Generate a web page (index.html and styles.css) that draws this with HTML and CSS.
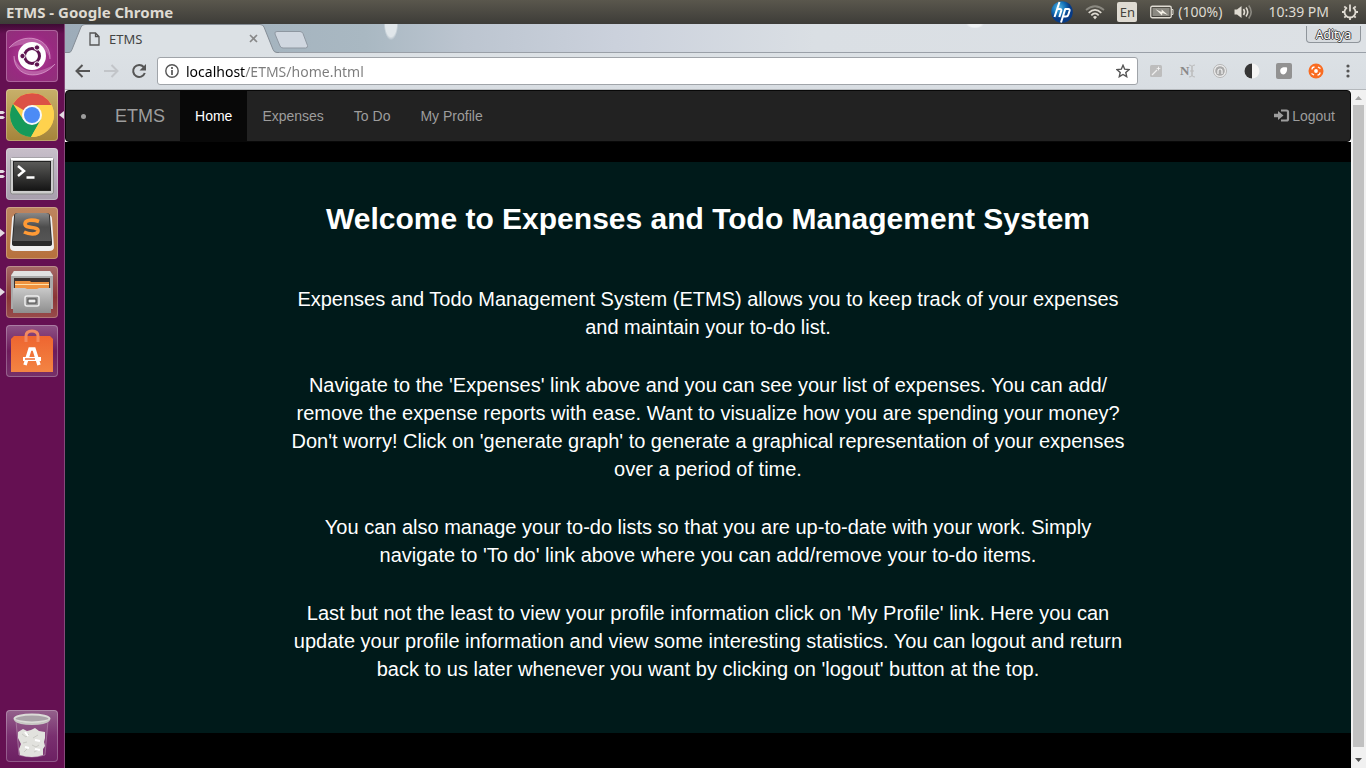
FILE: index.html
```html
<!DOCTYPE html>
<html lang="en">
<head>
<meta charset="utf-8">
<title>ETMS</title>
<link rel="stylesheet" href="styles.css">
</head>
<body>
<header class="panel">
  <span class="panel-title">ETMS - Google Chrome</span>
  <div class="indicators">
    <svg class="ind-hp" width="22" height="22" viewBox="0 0 22 22"><defs><radialGradient id="hp" cx=".35" cy=".3"><stop offset="0" stop-color="#59b8e4"/><stop offset=".6" stop-color="#1673b8"/><stop offset="1" stop-color="#073b86"/></radialGradient></defs><circle cx="11" cy="11" r="10.8" fill="url(#hp)"/><g fill="none" stroke="#fff" stroke-width="2"><path d="M8.500 1 3.500 16M6.400 8h2.500q1.900 0 1.300 2L8.300 16M14.400 7.500 10 21.500M14 8h3.200q1.900 0 1.300 2l-1.200 3.700q-.5 1.800-2.400 1.800h-2.700"/></g></svg>
    <svg class="ind-wifi" width="20" height="16" viewBox="0 0 20 16" fill="none" stroke-width="1.7"><path d="M1 6Q10-1.500 19 6" stroke="#8b8981"/><path d="M3.700 8.800Q10 3 16.300 8.800M6.300 11.400Q10 7.500 13.700 11.400" stroke="#dfdbd2"/><path d="M8 13q2-2 4 0l-2 2.400z" fill="#dfdbd2"/></svg>
    <span class="lang">En</span>
    <svg class="ind-battery" width="24" height="14" viewBox="0 0 24 14"><rect x=".75" y="1.250" width="20.500" height="11.500" rx="1.500" fill="none" stroke="#dfdbd2" stroke-width="1.300"/><path d="M2.500 3h17v8h-17z" fill="#8b8981"/><path d="M21.500 4.500h1.500v5h-1.500" fill="none" stroke="#dfdbd2"/><path d="m5.500 4.300 6 2.700.2-2.500 6.300 5.500-5.500-2-.5 2.600z" fill="#f4f0e6"/></svg>
    <span class="charge">(100%)</span>
    <svg class="ind-sound" width="20" height="16" viewBox="0 0 20 16"><path d="M.5 5.500H3L7.500 2v12L3 10.500H.5z" fill="#dfdbd2"/><path d="M9.500 5q2 3 0 6M12 3.500q3.500 4.500 0 9" fill="none" stroke="#dfdbd2" stroke-width="1.600"/><path d="M14.700 1.500q5 6.500 0 13" fill="none" stroke="#8b8981" stroke-width="1.600"/></svg>
    <span class="clock">10:39 PM</span>
    <svg width="18" height="18" viewBox="0 0 18 18" fill="none" stroke="#dfdbd2"><path d="M6 4.400a5.500 5.500 0 1 0 6 0" stroke-width="1.800"/><path d="M9 1.500v7" stroke-width="1.800"/><path d="M1 9h2.500M14.500 9H17M9 14.500V17M3.300 3.300l1.500 1.500M14.700 3.300l-1.500 1.500M3.300 14.700l1.500-1.500M14.700 14.700l-1.500-1.500" stroke-width="1.800"/></svg>
  </div>
</header>
<div class="desktop">
  <nav class="launcher" aria-label="Launcher">
    <button class="app app-dash" aria-label="Dash">
      <svg width="52" height="52" viewBox="0 0 52 52"><path d="M3 18C17 1 45 7 44 29 40 16 28 9 3 18zM49 34C35 51 8 48 8 26c4 14 18 22 41 8z" fill="#e9b6de" opacity=".35"/><path d="M3 18C17 1 45 7 44 29M49 34C35 51 8 48 8 26" fill="none" stroke="#e9b6de" opacity=".6"/><circle cx="26" cy="26" r="14" fill="#fff"/><circle cx="26" cy="26" r="7.500" fill="none" stroke="#5e1450" stroke-width="3"/><g fill="#5e1450" stroke="#fff"><circle cx="16.500" cy="26" r="2.700"/><circle cx="31" cy="17.500" r="2.700"/><circle cx="31" cy="34.500" r="2.700"/></g></svg>
    </button>
    <button class="app app-chrome" aria-label="Google Chrome">
      <svg width="52" height="52" viewBox="0 0 52 52"><circle cx="26" cy="26" r="22" fill="#ffd24d"/><path d="M26 26 7 15A22 22 0 0 1 45.500 16H26z" fill="#dc5145"/><path d="M7 15a22 22 0 0 0 18 33l10-18-9-4-8.500 5z" fill="#159a5a"/><path d="M26 16h19.500A22 22 0 0 1 25 48l10-17z" fill="#ffd24d"/><circle cx="26" cy="26" r="10" fill="#f8f8f8"/><circle cx="26" cy="26" r="8" fill="#4c8bf5"/></svg>
      <svg class="pips" width="5" height="8" viewBox="0 0 5 8"><path d="M0 0h3l2 1.500L3 3H0zM0 5h3l2 1.500L3 8H0z" fill="#e4dbe2"/></svg>
      <svg class="focus-arrow" width="5" height="8" viewBox="0 0 5 8"><path d="M5 0v8L0 4z" fill="#e4dbe2"/></svg>
    </button>
    <button class="app app-terminal" aria-label="Terminal">
      <svg width="52" height="52" viewBox="0 0 52 52"><defs><linearGradient id="term" x2="0" y2="1"><stop stop-color="#5b5b59"/><stop offset="1" stop-color="#151515"/></linearGradient></defs><rect x="4.500" y="10" width="43" height="36" rx="2" fill="#ccc" stroke="#8a8a8a"/><path d="M5 11h42" stroke="#fff" stroke-width="2"/><rect x="7.500" y="13.500" width="37" height="29" fill="url(#term)" stroke="#222"/><path d="m12 18 6 5-6 5M20.500 29.500h8" fill="none" stroke="#fff" stroke-width="2.500"/></svg>
      <svg class="pips" width="5" height="8" viewBox="0 0 5 8"><path d="M0 0h3l2 1.500L3 3H0zM0 5h3l2 1.500L3 8H0z" fill="#e4dbe2"/></svg>
    </button>
    <button class="app app-sublime" aria-label="Sublime Text">
      <svg width="52" height="52" viewBox="0 0 52 52"><defs><linearGradient id="sub" x2="0" y2="1"><stop stop-color="#888"/><stop offset=".5" stop-color="#4d4d4d"/><stop offset="1" stop-color="#555"/></linearGradient></defs><path d="M6 12q0-4 4-4h32q4 0 4 4l2 28q0 4-5 4H9q-5 0-5-4z" fill="#eee"/><path d="M8 9q0-3 4-3h28q4 0 4 3l2 26v2q0 2-3 2H9q-3 0-3-2v-2z" fill="#292929"/><path d="M9 8q0-2 3-2h28q3 0 3 2l2 26H7z" fill="url(#sub)"/><path d="M33 14.500C26 12 19 13 19 17c0 5 13.500 2 13 7-.5 4-9 3.500-14 1" fill="none" stroke="#ff9a35" stroke-width="3.600"/></svg>
      <svg class="pips" width="5" height="8" viewBox="0 0 5 8"><path d="M0 0 5 4 0 8z" fill="#e4dbe2"/></svg>
    </button>
    <button class="app app-files" aria-label="Files">
      <svg width="52" height="52" viewBox="0 0 52 52"><defs><linearGradient id="cab" x2="0" y2="1"><stop stop-color="#c9c9c9"/><stop offset="1" stop-color="#8e8e8e"/></linearGradient></defs><path d="M8 5h36l3 4v34H5V9z" fill="#aaa"/><path d="M8 5h36l3 5H5z" fill="#e2e2e2"/><path d="M8 12h36v12H8z" fill="#3d3330"/><path d="M9 15h15l1 1h18v8H9z" fill="#ef9340"/><path d="M9 18.500h34" stroke="#ffe1aa"/><path d="M7 22h12l2 1h10l2-1h12v25H7z" fill="url(#cab)"/><rect x="19" y="30" width="14" height="10" rx="2" fill="#999" stroke="#eee" stroke-width="1.500"/><rect x="22" y="33" width="8" height="4" fill="#eee" stroke="#444"/></svg>
      <svg class="pips" width="5" height="8" viewBox="0 0 5 8"><path d="M0 0 5 4 0 8z" fill="#e4dbe2"/></svg>
    </button>
    <button class="app app-software" aria-label="Ubuntu Software">
      <svg width="52" height="52" viewBox="0 0 52 52"><defs><linearGradient id="bag" x2="0" y2="1"><stop stop-color="#ee6530"/><stop offset="1" stop-color="#f38443"/></linearGradient></defs><path d="M5 14l3-3h36l3 3v33H5z" fill="url(#bag)"/><path d="M20 17v-6q0-5 6-5t6 5v6" fill="none" stroke="#f38a60" stroke-width="3"/><path d="m19 40 5-16h4l5 16" fill="none" stroke="#fff" stroke-width="3.500"/><path d="M17 34h18" stroke="#fff" stroke-width="4"/><path d="M19 34h10" stroke="#ef6c32" stroke-width="1.500"/></svg>
    </button>
    <button class="app app-trash" aria-label="Trash">
      <svg width="52" height="52" viewBox="0 0 52 52"><path d="m10 11 3 34q13 4 26 0l3-34z" fill="#a77b9f" fill-opacity=".25" stroke="#c4a3bd" stroke-opacity=".5"/><path d="m12 22 5-3 4 2 4-1 4-2 4 3 6 1v6l-1 4 1 4-2 3v6q-11 4-23 0l-1-6 2-5-3-6z" fill="#e2e2de"/><path d="m16 24 4 3 3-3M27 28l5-3M17 33l4-1M26 35l4 2 3-2M18 42l3-3M28 42l4-2" fill="none" stroke="#c9c9c4"/><path d="m19 22 3 4M29 30l5 1M19 37l4 1M29 39l5 1" stroke="#fff" stroke-width="2"/><ellipse cx="26" cy="8.500" rx="17.500" ry="4" fill="#aaa3a8" stroke="#dcdcd8" stroke-width="2"/><path d="M8.500 9v2q4 4 17.500 4t17.500-4V9q-4 4-17.500 4T8.500 9z" fill="#c9c9c5"/></svg>
    </button>
  </nav>
  <div class="browser">
    <div class="tabstrip">
      <svg class="tab-shape" width="214" height="29" viewBox="0 0 214 29"><path d="M0 28.500h4q2 0 3-3L16 3q1-2.500 4-2.500h175q3 0 4 2.500l9 22.500q1 3 4 3h2V29H0z" fill="#dce1e5"/><path d="M0 28.500h4q2 0 3-3L16 3q1-2.500 4-2.500h175q3 0 4 2.500l9 22.500q1 3 4 3h2" fill="none" stroke="#858d96"/></svg>
      <div class="tab">
        <svg width="11" height="14" viewBox="0 0 11 14" fill="none" stroke="#555" stroke-width="1.300"><path d="M1 1h5.500L10 4.500V13H1zM6.500 1v3.500H10"/></svg>
        <span class="tab-name">ETMS</span>
        <button class="plain" aria-label="Close tab"><svg width="9" height="9" viewBox="0 0 9 9" stroke="#888" stroke-width="1.600"><path d="m1 1 7 7M8 1 1 8"/></svg></button>
      </div>
      <button class="plain new-tab" aria-label="New tab"><svg width="34" height="18" viewBox="0 0 34 18"><path d="M3 .5h23q2 0 3 2l4.500 12q.5 2.500-2 2.500H9q-2 0-3-2L1 3Q.300.500 3 .5z" fill="#d0d7e0" stroke="#8e97a1"/></svg></button>
      <button class="profile">Aditya</button>
    </div>
    <div class="toolbar">
      <button class="plain" aria-label="Back"><svg width="16" height="14" viewBox="0 0 16 14" fill="none" stroke="#555" stroke-width="2"><path d="M15 7H2M7.500 1l-6 6 6 6"/></svg></button>
      <button class="plain" aria-label="Forward"><svg width="16" height="14" viewBox="0 0 16 14" fill="none" stroke="#c2c5c9" stroke-width="2"><path d="M1 7h13M8.500 1l6 6-6 6"/></svg></button>
      <button class="plain" aria-label="Reload"><svg width="16" height="16" viewBox="0 0 16 16"><path d="M12.700 4A6 6 0 1 0 13.800 10" fill="none" stroke="#555" stroke-width="2"/><path d="M15 1v6.500H8.500z" fill="#555"/></svg></button>
      <div class="omnibox">
        <svg width="14" height="14" viewBox="0 0 14 14"><circle cx="7" cy="7" r="6.200" fill="none" stroke="#555" stroke-width="1.400"/><path d="M7 6v5M7 3v2" stroke="#555" stroke-width="1.700"/></svg>
        <input class="url" type="text" aria-label="Address" value="localhost/ETMS/home.html">
        <button class="plain" aria-label="Bookmark"><svg width="14" height="14" viewBox="0 0 14 14"><path d="m7 1.300 1.700 3.900 4.300.4-3.200 2.900.9 4.200L7 10.500l-3.700 2.200.9-4.200L1 5.600l4.300-.4z" fill="none" stroke="#555" stroke-width="1.400"/></svg></button>
      </div>
      <div class="extensions">
        <button class="plain" aria-label="Wand"><svg width="16" height="16" viewBox="0 0 16 16"><rect x="2" y="2" width="12" height="12" rx="1.500" fill="#bdbdbd"/><path d="m4 12 5-5" stroke="#eee" stroke-width="1.200"/><path d="m10.500 3 .6 1.900 1.900.6-1.900.6-.6 1.900-.6-1.900L8 5.500l1.900-.6z" fill="#f5f5f5"/></svg></button>
        <button class="plain ext-note" aria-label="Notes"><span>N</span><svg width="6" height="14" viewBox="0 0 6 14"><path d="M0 1q3 0 3 2v8q0 2-3 2M6 1Q3 1 3 3v8q0 2 3 2M1 7h4" fill="none" stroke="#bbb"/></svg></button>
        <button class="plain" aria-label="Privacy"><svg width="16" height="16" viewBox="0 0 16 16"><circle cx="8" cy="8" r="6.500" fill="#eee" stroke="#b5b5b5"/><circle cx="8" cy="8" r="4.800" fill="#a9a9a9"/><path d="M6 11V8a2 2 0 0 1 4 0v3" fill="none" stroke="#f5f5f5" stroke-width="1.200"/></svg></button>
        <button class="plain" aria-label="Contrast"><svg width="16" height="16" viewBox="0 0 16 16"><circle cx="8" cy="8" r="7.500" fill="#f5f5f5"/><path d="M8 .5a7.500 7.500 0 0 0 0 15z" fill="#353535"/></svg></button>
        <button class="plain" aria-label="Pocket"><svg width="16" height="16" viewBox="0 0 16 16"><rect width="16" height="16" rx="2" fill="#929292"/><path d="M4.500 9.500C3 5 7 3.500 11 4.500 12 10 7 14 4.500 9.500z" fill="#fff"/></svg></button>
        <button class="plain" aria-label="Lifebuoy"><svg width="16" height="16" viewBox="0 0 16 16"><circle cx="8" cy="8" r="7.500" fill="#f96c22"/><path d="M4 6.500Q4 4 6.500 4M10 4l2.500 1.500M12 9.500q0 2.500-2.500 2.500M6 12l-2.500-1.500" fill="none" stroke="#fff" stroke-width="1.300"/><circle cx="8" cy="8" r="1.900" fill="#fff"/></svg></button>
        <button class="plain" aria-label="Menu"><svg width="16" height="16" viewBox="0 0 16 16" fill="#555"><circle cx="8" cy="3" r="1.600"/><circle cx="8" cy="8" r="1.600"/><circle cx="8" cy="13" r="1.600"/></svg></button>
      </div>
    </div>
    <div class="viewport">
      <div class="page">
        <div class="nav-wrap">
          <nav class="navbar">
            <span class="bullet"></span>
            <a class="brand" href="#">ETMS</a>
            <a class="nav-link active" href="#">Home</a>
            <a class="nav-link" href="#">Expenses</a>
            <a class="nav-link" href="#">To Do</a>
            <a class="nav-link" href="#">My Profile</a>
            <a class="nav-link logout" href="#"><svg width="16" height="14" viewBox="0 0 16 14"><path d="M7 1.500h5.500Q14 1.500 14 3v7q0 1.500-1.500 1.500H7" fill="none" stroke="#9d9d9d" stroke-width="2.200"/><path d="M0 4.800h4V2l5.500 4.500L4 11V8.200H0z" fill="#9d9d9d"/></svg>Logout</a>
          </nav>
        </div>
        <main class="welcome">
          <h1>Welcome to Expenses and Todo Management System</h1>
          <p>Expenses and Todo Management System (ETMS) allows you to keep track of your expenses and maintain your to-do list.</p>
          <p>Navigate to the 'Expenses' link above and you can see your list of expenses. You can add/<wbr>remove the expense reports with ease. Want to visualize how you are spending your money? Don't worry! Click on 'generate graph' to generate a graphical representation of your expenses over a period of time.</p>
          <p>You can also manage your to-do lists so that you are up-to-date with your work. Simply navigate to 'To do' link above where you can add/remove your to-do items.</p>
          <p>Last but not the least to view your profile information click on 'My Profile' link. Here you can update your profile information and view some interesting statistics. You can logout and return back to us later whenever you want by clicking on 'logout' button at the top.</p>
        </main>
      </div>
      <div class="scrollbar" aria-hidden="true">
        <svg width="15" height="15" viewBox="0 0 15 15"><path d="m4 10 3.500-4L11 10z" fill="#a3a3a3"/></svg>
        <div class="thumb"></div>
        <svg width="15" height="15" viewBox="0 0 15 15"><path d="m4 5 3.500 4L11 5z" fill="#505050"/></svg>
      </div>
    </div>
  </div>
</div>
</body>
</html>
```
FILE: styles.css
```css
* { box-sizing: border-box; }

body {
  margin: 0;
  height: 100vh;
  display: flex;
  flex-direction: column;
  overflow: hidden;
  font-family: "Noto Sans", "Open Sans", sans-serif;
  background: #000;
}

button { font: inherit; border: 0; cursor: pointer; }
svg { display: block; flex: none; }
.plain { background: none; padding: 0; display: flex; align-items: center; }

/* Top panel */
.panel {
  flex: none;
  height: 24px;
  display: flex;
  align-items: center;
  justify-content: space-between;
  padding: 0 7px 0 6px;
  background: linear-gradient(#5a574d, #3d3c38);
  color: #dfdbd2;
  font-size: 14px;
  line-height: 24px;
}
.panel-title { font-weight: 700; font-size: 15px; line-height: 22px; }
.indicators { display: flex; align-items: center; }
.ind-wifi { margin-left: 12px; }
.lang {
  margin: 0 13px 0 12px;
  width: 20px;
  height: 20px;
  border-radius: 2px;
  background: #dfdbd2;
  color: #45433d;
  font-size: 13px;
  line-height: 20px;
  text-align: center;
}
.charge { margin: 0 12px 0 4px; }
.clock { margin: 0 12px 0 14px; }

/* Launcher */
.desktop { flex: 1; min-height: 0; display: flex; }
.launcher {
  flex: none;
  width: 65px;
  display: flex;
  flex-direction: column;
  align-items: center;
  gap: 7px;
  padding: 6px 1px 6px 0;
  background: linear-gradient(#3e0a34, #651052 10px, #651052);
  border-right: 1px solid #86497a;
}
.app {
  position: relative;
  flex: none;
  width: 52px;
  height: 52px;
  padding: 0;
  border-radius: 4px;
  box-shadow: inset 0 0 0 1px rgba(255, 255, 255, .25);
}
.app-dash { background: radial-gradient(#b9439f, #982a80 60%, #8f3179); }
.app-chrome { background: linear-gradient(#c8b06a, #a5843a); }
.app-terminal { background: linear-gradient(#c8bfca, #a79ead); }
.app-sublime { background: linear-gradient(#bd8560, #b7713c); }
.app-files { background: linear-gradient(#a56967, #8a3536 60%, #984b4b); }
.app-software { background: linear-gradient(#8f5386, #6d1c5c 50%, #76316a); }
.app-trash { margin-top: auto; background: linear-gradient(#94618c, #7a3070 50%, #6c2062); }
.pips { position: absolute; left: -6px; top: 22px; }
.focus-arrow { position: absolute; right: -6px; top: 22px; }

/* Browser chrome */
.browser { flex: 1; min-width: 0; display: flex; flex-direction: column; }
.tabstrip {
  position: relative;
  flex: none;
  height: 29px;
  display: flex;
  align-items: flex-start;
  border-bottom: 1px solid #9aa0a8;
  background:
    radial-gradient(ellipse 8px 18px at 326px 0, #e0e6ea 70%, transparent 90%),
    radial-gradient(ellipse 10px 5px at 910px 0, #eef1f3 60%, transparent 90%),
    linear-gradient(90deg, #9dacb9, #a9b8c2 300px, #bcc5d0 400px, #cbd1dc 550px, #dadfe4 750px, #dde1e5);
}
.tab-shape { position: absolute; left: 0; top: 0; }
.tab {
  position: relative;
  width: 209px;
  height: 29px;
  padding: 0 16px 0 24px;
  display: flex;
  align-items: center;
}
.tab-name { flex: 1; margin-left: 9px; font-size: 13px; color: #444; }
.new-tab { margin-top: 7px; }
.profile {
  margin: 2px 5px 0 auto;
  width: 55px;
  height: 17px;
  padding: 0;
  border: 1px solid #8f959b;
  border-top: 0;
  border-radius: 0 0 4px 4px;
  background: #d8dce0;
  color: #fff;
  font-size: 12px;
  line-height: 17px;
  text-shadow: 1px 0 #444, -1px 0 #444, 0 1px #444, 0 -1px #444;
}
.toolbar {
  flex: none;
  height: 37px;
  display: flex;
  align-items: center;
  gap: 12px;
  padding: 0 10px;
  border-bottom: 1px solid #b4b8bc;
  background: linear-gradient(#dce1e5, #d8dde2);
}
.omnibox {
  flex: 1;
  min-width: 0;
  height: 28px;
  margin-right: -2px;
  margin-left: -2px;
  padding: 0 7px;
  display: flex;
  align-items: center;
  border: 1px solid #a0a4a9;
  border-radius: 3px;
  background: #fff;
}
.url {
  flex: 1;
  min-width: 0;
  height: 26px;
  margin: 0;
  padding: 0 0 0 7px;
  border: 0;
  outline: 0;
  font: 14px "Noto Sans", "Open Sans", sans-serif;
  color: transparent;
  background: linear-gradient(90deg, #000 66px, #7b7b7b 66px);
  -webkit-background-clip: text;
  background-clip: text;
}
.extensions { display: flex; gap: 16px; }
.ext-note { width: 16px; font: 700 13px "Liberation Serif", serif; color: #888; }

/* Page */
.viewport { flex: 1; min-height: 0; display: flex; }
.page {
  flex: 1;
  min-width: 0;
  overflow: hidden;
  font: 14px/20px "Liberation Sans", Arial, sans-serif;
}
.nav-wrap { background: #fff; }
.navbar {
  display: flex;
  align-items: center;
  padding-left: 15px;
  border: 1px solid #080808;
  border-radius: 4px;
  background: #222;
}
.bullet { width: 5px; height: 5px; margin-right: 14px; border-radius: 50%; background: #9d9d9d; }
.brand, .nav-link { padding: 15px; color: #9d9d9d; text-decoration: none; }
.brand { font-size: 18px; }
.nav-link.active { background: #080808; color: #fff; }
.logout { display: flex; align-items: center; gap: 2px; margin-left: auto; }
.welcome {
  margin-top: 20px;
  padding: 40px 0 50px;
  background: #001a1a;
  color: #fff;
  text-align: center;
}
.welcome h1 { margin: 0 0 50px; font-size: 30px; line-height: 33px; }
.welcome p { width: 65%; margin: 0 auto 30px; font-size: 20px; line-height: 28px; }
.welcome p:last-child { margin-bottom: 0; }
.scrollbar { flex: none; width: 15px; display: flex; flex-direction: column; background: #f1f1f1; }
.thumb { flex: 1; margin: 0 2px 6px; background: #c1c1c1; }
```
